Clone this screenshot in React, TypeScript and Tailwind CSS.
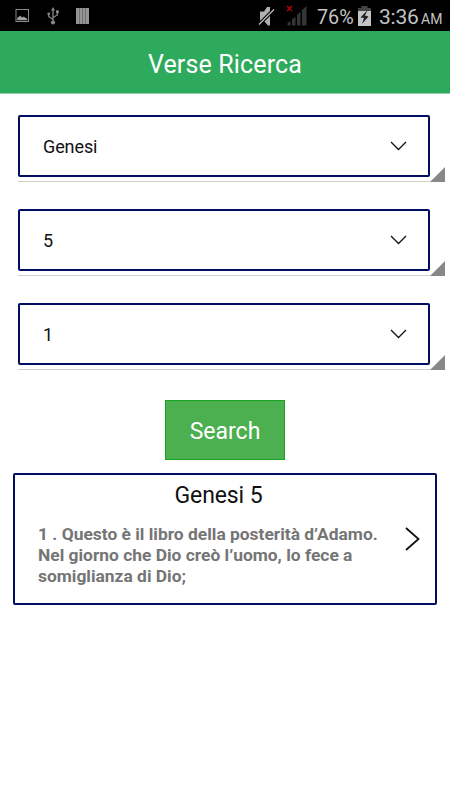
import type React from "react"

interface SpinnerProps {
  value: string
}

const FIELDS = ["Genesi", "5", "1"]

function StatusBar() {
  return (
    <div className="flex h-[31px] items-center bg-black text-[#c4c4c4]">
      {/* Notifications */}
      <svg className="ml-[15px] h-[15px] w-[15px] shrink-0" viewBox="0 0 15 15">
        <rect x="1" y="1.5" width="12.5" height="12" fill="none" stroke="#8a8a8a" />
        <path d="M2.5 12V10L5 8 7 9.5 9 9 12 11V12z" fill="#a2a2a2" stroke="#a2a2a2" strokeWidth="0.5" />
      </svg>
      <svg className="ml-[17px] h-[18px] w-[12px] shrink-0" viewBox="0 0 12 18">
        <path d="M6 2.5V15M6 12.5L1.7 9.5V7M6 10.5L10.3 8V5" fill="none" stroke="#868686" strokeWidth="1.3" />
        <path d="M6 0L8 3.5H4z" fill="#868686" />
        <circle cx="6" cy="15.5" r="2.1" fill="#868686" />
        <circle cx="1.7" cy="6.8" r="1.4" fill="#868686" />
        <rect x="9" y="3.3" width="2.8" height="2.8" fill="#868686" />
      </svg>
      <svg className="ml-[17px] h-[16px] w-[13px] shrink-0" viewBox="0 0 13 16">
        <rect width="13" height="16" fill="#959595" />
        <path d="M3.5 0V16M6.5 0V16M9.5 0V16" stroke="#707070" />
      </svg>

      {/* Sound and signal */}
      <svg className="ml-[169px] h-[20px] w-[17px] shrink-0" viewBox="0 0 17 20">
        <path d="M2 5.5H6L9 1H12V19.5H10L6 15H2z" fill="#b0b0b0" />
        <path d="M1 18.5L16 3.5" stroke="#000" strokeWidth="3.6" />
        <path d="M1 18.5L16 3.5" stroke="#b8b8b8" strokeWidth="1.4" />
      </svg>
      <svg className="ml-[11px] h-[21px] w-[22px] shrink-0" viewBox="0 0 22 21">
        <path d="M1.5 20.5V18L4.5 16V20.5zM6 20.5V14.5L9.5 11.5V20.5zM11 20.5V10L14.5 6.5V20.5zM16 20.5V5L20.5 1V20.5z" fill="#353535" />
        <path d="M1 1L6 6M6 1L1 6" stroke="#b40000" strokeWidth="1.5" />
      </svg>
      <span className="mt-[3px] ml-[9px] w-[41px] shrink-0 text-[21px] leading-none">
        <span className="inline-block origin-left scale-x-[0.94]">76%</span>
      </span>
      <svg className="h-[20px] w-[13px] shrink-0" viewBox="0 0 13 20">
        <path d="M3.5 0H9.5V2H13V5H0V2H3.5z" fill="#444" />
        <rect y="5" width="13" height="15" fill="#c4c4c4" />
        <path d="M9.5 4L2.5 11.5L6 12L4 18L10.5 10.5L7 9.5z" fill="#222" />
      </svg>
      <span className="mt-[3px] ml-[8px] w-[42px] shrink-0 text-[21px] leading-none tracking-[-0.2px]">3:36</span>
      <span className="mt-[6px] text-[14px] leading-none">AM</span>
    </div>
  )
}

function Spinner({ value }: SpinnerProps) {
  return (
    <div className="relative h-[67px] border-b border-[#d0d0d0]">
      <button className="flex h-[62px] w-[412px] items-center justify-between rounded-[2px] border-2 border-[#000f62] pr-[21px] pl-[23px]">
        <span className="pt-[2px] text-[18px] leading-none tracking-[-0.1px] text-[#111]">{value}</span>
        <svg className="h-[10px] w-[17px]" viewBox="0 0 17 10">
          <path d="M1 1L8.5 8.5L16 1" fill="none" stroke="#111" strokeWidth="1.3" />
        </svg>
      </button>
      <svg className="absolute right-0 -bottom-px h-[15px] w-[15px]" viewBox="0 0 15 15">
        <path d="M15 0V15H0z" fill="#888" />
      </svg>
    </div>
  )
}

function VerseCard({ title, children }: { title: string; children: React.ReactNode }) {
  return (
    <div className="mx-[13px] mt-[13px] h-[132px] rounded-[2px] border-2 border-[#000f62]">
      <h2 className="pt-[9px] pr-[13px] text-center text-[23px] leading-[24px] tracking-[-0.1px] text-[#111]">{title}</h2>
      <div className="mt-[16px] flex justify-between pr-[15px] pl-[23px]">
        <p className="text-[17.4px] leading-[21px] font-bold whitespace-nowrap text-[#757575]">{children}</p>
        <svg className="mt-[3px] h-[24px] w-[15px]" viewBox="0 0 15 24">
          <path d="M1 1L13.5 12L1 23" fill="none" stroke="#111" strokeWidth="1.8" />
        </svg>
      </div>
    </div>
  )
}

export default function App() {
  return (
    <div className="h-[800px] w-[450px] overflow-hidden bg-white font-['Roboto',sans-serif]">
      <StatusBar />

      {/* Header */}
      <header className="flex h-[63px] items-center justify-center border-b border-[#8fd0a7] bg-[#2eaa5c]">
        <h1 className="mt-[4px] text-[25px] leading-none tracking-[0.15px] text-white">Verse Ricerca</h1>
      </header>

      {/* Search form */}
      <div className="mt-[21px] flex flex-col gap-[27px] pr-[5px] pl-[18px]">
        {FIELDS.map((value) => (
          <Spinner key={value} value={value} />
        ))}
      </div>
      <button className="mx-auto mt-[30px] flex h-[60px] w-[120px] items-center justify-center border border-[#16a421] bg-[#4caf50] pt-[2px] text-[23px] leading-none text-white">
        Search
      </button>

      <VerseCard title="Genesi 5">
        1 . Questo è il libro della posterità d’Adamo.
        <br />
        Nel giorno che Dio creò l’uomo, lo fece a
        <br />
        somiglianza di Dio;
      </VerseCard>
    </div>
  )
}
